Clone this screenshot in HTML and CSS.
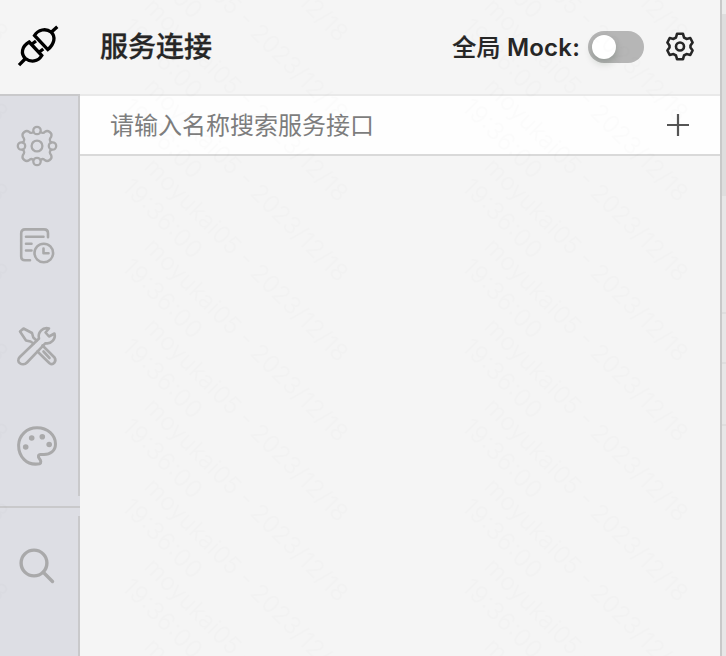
FILE: index.html
```html
<!DOCTYPE html>
<html lang="zh-CN">
<head>
<meta charset="utf-8">
<title>服务连接</title>
<link rel="stylesheet" href="styles.css">
</head>
<body>
<div class="app">
  <nav class="sidebar">
    <div class="tab active">
      <svg width="44" height="44" viewBox="0 0 44 44">
        <path d="M19.500 10.500C23 4.500 31 3 36 7C41 11.500 39.500 19 32.800 24.600ZM36 7.500L42.300 1.800M14.200 17L26.800 30.500C23 37 15.500 37.500 10.500 33.500C5.500 29 6.500 21.500 14.200 17ZM10.500 33.500L4 40.200M16 19.800L21 16M23.300 27.800L28.300 24"/>
      </svg>
    </div>
    <div class="group">
      <div class="tab">
        <svg width="44" height="44" viewBox="0 0 44 44" stroke-width="2.300">
          <circle cx="22" cy="22" r="5.400"/><circle cx="22" cy="6.500" r="3.700"/><circle cx="37.500" cy="22" r="3.700"/><circle cx="22" cy="37.500" r="3.700"/><circle cx="6.500" cy="22" r="3.700"/>
          <path d="M25.700 8Q28 10 30 7.700C33 5.700 37.500 9 36.300 12.500C34.500 15 34 17 36.500 18.300M36.500 25.700C34 27 34.500 29 36.300 31.500C37.500 35 33 38.300 30 36.300Q28 34 25.700 36M18.300 36Q16 34 14 36.300C11 38.300 6.500 35 7.700 31.500C9.500 29 10 27 7.500 25.700M7.500 18.300C10 17 9.500 15 7.700 12.500C6.500 9 11 5.700 14 7.700Q16 10 18.300 8"/>
        </svg>
      </div>
      <div class="tab">
        <svg width="44" height="44" viewBox="0 0 44 44" stroke-width="2.600">
          <path d="M15 36.200H10Q6.200 36.200 6.200 32.400V9.200Q6.200 5.400 10 5.400H29Q33 5.400 33 9.200V13.200M11 12.700H28.500M11 19.700H16.500M11 26.500H16.500"/><circle cx="28.800" cy="29" r="9.300"/><path d="M28.500 24.500V29.200H33.500"/>
        </svg>
      </div>
      <div class="tab">
        <svg width="44" height="44" viewBox="0 0 44 44" stroke-width="2.600">
          <path d="M18.500 19.500L15.500 17.500L11 16.500L5 7.500L8.500 4.500L17 9L18.300 13.500L21.500 16.500M27.500 21.500L39.500 33.500C42 37.500 38 42 34.500 39.300L22.500 27.500M28.500 27.500L34.500 34"/>
          <path d="M4.800 33L24 14.500C22.500 8.500 27.500 2.800 34 4.500L30.500 8.500L34 12.500L39.500 9.500C41 15 36 20.500 30.500 19.200L12 38.500C7.500 43 0 38 4.800 33Z"/>
        </svg>
      </div>
      <div class="tab">
        <svg width="44" height="44" viewBox="0 0 44 44" stroke-width="3">
          <path d="M24.500 39.800C11 42 3.500 32 3.600 21C4 11.500 11.500 3.800 22 3.800C33 3.800 40.500 11.500 40.500 20C40.500 27 35 30.500 29 30.500H25.500C23 30.500 23 33 24.300 34.500C26 36.500 26.500 39 24.500 39.800Z"/>
          <g class="dots"><circle cx="10.700" cy="23" r="2.800"/><circle cx="16.700" cy="14" r="2.800"/><circle cx="27.300" cy="12.700" r="2.800"/><circle cx="34.200" cy="20.500" r="2.800"/></g>
        </svg>
      </div>
    </div>
    <hr class="divider">
    <div class="group rest">
      <div class="tab">
        <svg width="44" height="44" viewBox="0 0 44 44" stroke-width="3.400"><circle cx="19" cy="19" r="12.900"/><path d="M28.300 28.300L37.500 37.500"/></svg>
      </div>
    </div>
  </nav>
  <main class="panel">
    <header class="header">
      <h1>服务连接</h1>
      <span class="mock"><span class="scope">全局</span> Mock:</span>
      <span class="switch"><span class="knob"></span></span>
      <svg class="gear" width="32" height="32" viewBox="0 0 32 32">
        <circle cx="16" cy="15.500" r="4"/>
        <path d="M13 2.800H19L20 6.500L22.500 7.900L26.300 7L28.600 11.500L26.500 14.500V16.500L28.600 19.500L26.300 24L22.500 23.100L20 24.500L19 28.200H13L12 24.500L9.500 23.100L5.700 24L3.400 19.500L5.500 16.500V14.500L3.400 11.500L5.700 7L9.500 7.900L12 6.500Z"/>
      </svg>
    </header>
    <div class="search">
      <input class="query" placeholder="请输入名称搜索服务接口">
      <svg class="plus" width="24" height="24" viewBox="0 0 24 24"><path d="M12 1V23M1 12H23"/></svg>
    </div>
  </main>
  <aside class="edge"><i class="top"></i><i class="mid"></i><i class="row first"></i><i class="row second"></i><i class="row third"></i></aside>
</div>
<svg class="watermark" width="720" height="656">
  <defs>
    <pattern id="mark" x="120" y="0" width="340" height="80" patternUnits="userSpaceOnUse">
      <g id="stamp" transform="translate(23 8) rotate(45)">
        <text x="0" y="0" textLength="276">moyukai05 - 2023/12/18</text>
        <text x="-1" y="30" textLength="101">19:36:00</text>
      </g>
      <use href="#stamp" y="-240"/><use href="#stamp" y="-160"/><use href="#stamp" y="-80"/><use href="#stamp" y="80"/>
    </pattern>
  </defs>
  <rect width="720" height="656" fill="url(#mark)"/>
</svg>
</body>
</html>
```
FILE: styles.css
```css
* { box-sizing: border-box; }
body { margin: 0; overflow: hidden; font-family: Inter, "Noto Sans CJK SC", sans-serif; color: #262626; }
.app { display: flex; height: 656px; background: #f5f5f5; }
svg { fill: none; stroke-linecap: round; stroke-linejoin: round; }
.sidebar { width: 80px; display: flex; flex-direction: column; background: #dddee4; }
.tab { height: 100px; display: flex; align-items: center; padding-left: 15px; stroke: #a9a9aa; }
.tab.active { height: 96px; background: #f5f5f5; border-bottom: 2px solid #c9c9cb; }
.tab.active svg { stroke: #000; stroke-width: 3.3; stroke-linecap: butt; stroke-linejoin: miter; }
.group { height: 400px; border-right: 2px solid #c9c9cb; }
.dots { fill: #a9a9aa; stroke: none; }
.divider { width: 80px; margin: 10px 0 8px; border: 0; height: 2px; background: #c9c9cb; }
.group.rest { flex: 1; height: auto; }
.panel { width: 640px; }
.header { height: 96px; border-bottom: 2px solid #e9e9e9; display: flex; align-items: center; padding: 0 24px 0 20px; }
h1 { margin: 0 auto 0 0; font-size: 28px; font-weight: 500; line-height: 40px; -webkit-text-stroke: .3px #262626; }
.mock { font-size: 24px; font-weight: 600; line-height: 36px; letter-spacing: .2px; padding-top: 2px; }
.scope { font-weight: 500; -webkit-text-stroke: .2px #262626; }
.switch { width: 56px; height: 32px; margin: 0 20px 0 8px; padding: 4px; border-radius: 16px; background: #b6b6b6; }
.knob { display: block; width: 24px; height: 24px; border-radius: 50%; background: #fff; box-shadow: 0 4px 8px rgba(0, 35, 11, .2); }
.gear { stroke: #262626; stroke-width: 2.6; }
.search { height: 60px; border-bottom: 2px solid #d9d9d9; background: #fefefe; display: flex; align-items: center; padding: 0 30px; }
.query { flex: 1; padding: 2px 0 0; border: 0; background: none; font: 24px/36px Inter, "Noto Sans CJK SC", sans-serif; }
.query::placeholder { color: #7d7d7d; opacity: 1; }
.plus { stroke: #555; stroke-width: 2.2; stroke-linecap: butt; }
.edge { width: 6px; border-left: 2px solid #c9c9c9; background: #e7e7e7; display: flex; flex-direction: column; }
.top { height: 14px; background: #ececec; }
.mid { height: 182px; background: #dedede; }
.row { border-bottom: 2px solid #dedede; }
.first { height: 118px; }
.second { height: 50px; }
.third { height: 62px; }
.watermark { position: absolute; left: 0; top: 0; pointer-events: none; }
.watermark text { font: 300 24px Inter, sans-serif; fill: #000; fill-opacity: .011; }
```
